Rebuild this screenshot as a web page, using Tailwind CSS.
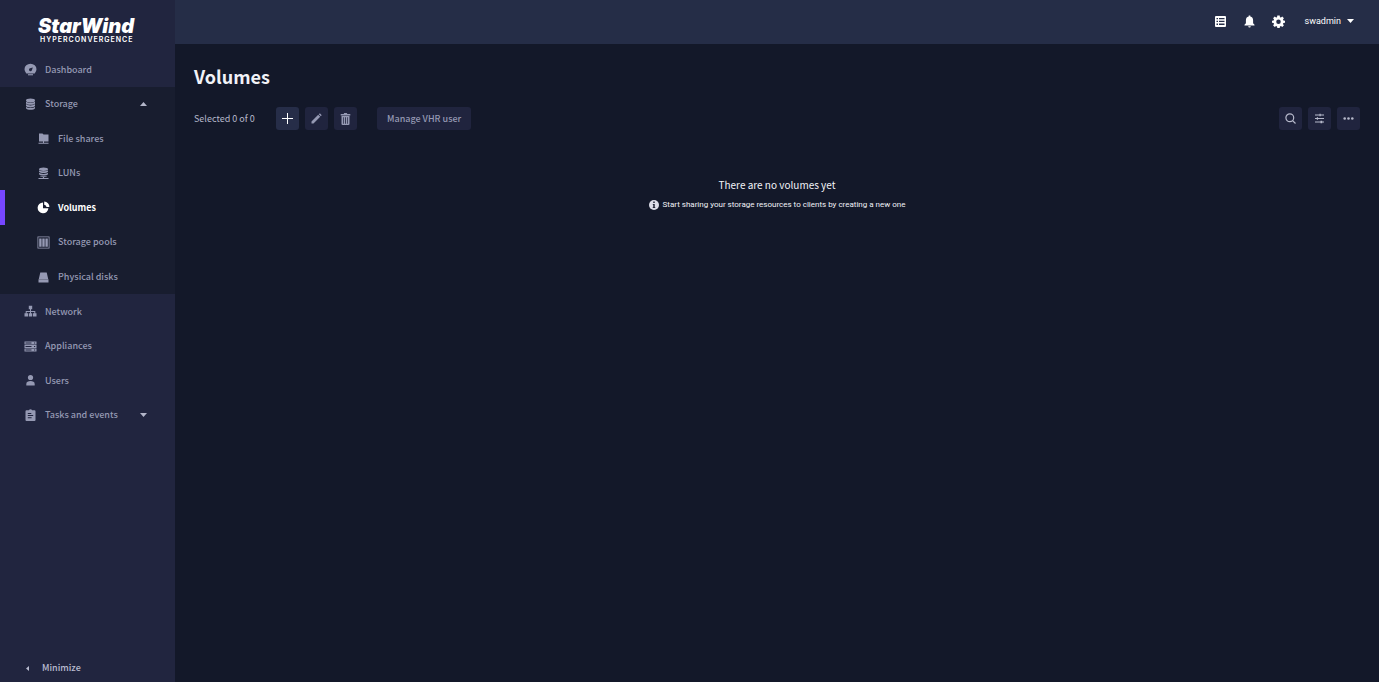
<!DOCTYPE html>
<html lang="en">
<head>
  <meta charset="UTF-8" />
  <title>StarWind - Volumes</title>
  <meta name="viewport" content="width=device-width, initial-scale=1.0">
  <!-- Tailwind CSS -->
  <script src="https://cdn.jsdelivr.net/npm/@tailwindcss/browser@4"></script>
</head>
<body class="flex min-h-screen bg-[#131829] font-['Noto_Sans_CJK_SC','Noto_Sans',sans-serif] text-[9px] leading-4 text-[#9599b3]">

  <!-- Sidebar -->
  <aside class="flex w-[175px] shrink-0 flex-col bg-[#21253f]">
    <a href="#" class="flex h-[52px] shrink-0 flex-col pt-4 pl-[38px] font-[Inter,sans-serif] text-white">
      <span class="text-[20px] leading-5 font-black italic">StarWind</span>
      <span class="pl-[2px] text-[7px] leading-[7px] font-semibold tracking-[1px]">HYPERCONVERGENCE</span>
    </a>

    <nav class="grid h-[380px] shrink-0 auto-rows-fr font-medium">
      <a href="#" class="flex items-center gap-2 pt-px pl-6">
        <svg class="size-[13px]" viewBox="0 0 13 13" fill="currentColor"><path fill-rule="evenodd" d="M2.300 10.400A5.900 5.900 0 0 1 .5 6.300a6 5.600 0 0 1 12 0 5.900 5.900 0 0 1-1.800 4.100zM5 6.800a1.500 1.500 0 0 0 2.900.5L8.800 4.600 6 5.300a1.500 1.500 0 0 0-1 1.500z"/><path d="M4 11.200h5v1.100H4z"/></svg>
        Dashboard
      </a>

      <!-- Storage group -->
      <div class="row-span-6 grid auto-rows-fr bg-[#181d2f]">
        <button type="button" class="flex items-center gap-2 pt-px pl-6" aria-expanded="true">
          <svg class="size-[13px]" viewBox="0 0 13 13" fill="currentColor"><ellipse cx="6.500" cy="2.500" rx="4.500" ry="1.900"/><path d="M2 3.500c1 1.700 8 1.700 9 0v2c-1 1.700-8 1.700-9 0zM2 6.100c1 1.700 8 1.700 9 0v2c-1 1.700-8 1.700-9 0zM2 8.700c1 1.700 8 1.700 9 0v1.600c-1 2-8 2-9 0z"/></svg>
          Storage
          <svg class="mr-7 ml-auto h-1 w-[7px]" viewBox="0 0 7 4" fill="#b3b6c9"><path d="M0 4h7L3.500 0z"/></svg>
        </button>
        <a href="#" class="flex items-center gap-2 pt-px pl-[37px]">
          <svg class="size-[13px]" viewBox="0 0 13 13" fill="currentColor"><path d="M2 1.500h3.500l1 1H11.500v7H2zM6 9.500h1V11H6zM1.500 10.800h10v1h-10z"/></svg>
          File shares
        </a>
        <a href="#" class="flex items-center gap-2 pt-px pl-[37px]">
          <svg class="size-[13px]" viewBox="0 0 13 13" fill="currentColor"><ellipse cx="6.500" cy="2.200" rx="4.500" ry="1.700"/><path d="M2 3.200c1 1.500 8 1.500 9 0v1.600c-1 1.700-8 1.700-9 0zM2 5.800c1 1.500 8 1.500 9 0v1.400c-1 1.700-8 1.700-9 0zM3 8.700c1 .8 6 .8 7 0-.3 1-1.500 1.400-3 1.500v.7h4.500v1h-10v-1H6v-.7C4.500 10.100 3.300 9.700 3 8.700z"/></svg>
          LUNs
        </a>
        <a href="#" class="flex items-center gap-2 border-l-5 border-[#7646ff] pt-px pl-8 font-bold text-white" aria-current="page">
          <svg class="size-[13px]" viewBox="0 0 13 13" fill="currentColor"><path d="M6 1.500v5.700h5.400A5.400 5.400 0 1 1 6 1.500zM7.200.5a5.200 5.200 0 0 1 5.200 5.500H9.500A2.500 2.500 0 0 0 7.200 3.800z"/></svg>
          Volumes
        </a>
        <a href="#" class="flex items-center gap-2 pt-px pl-[37px]">
          <svg class="size-[13px]" viewBox="0 0 13 13" fill="currentColor"><path fill-rule="evenodd" d="M.5.500h12v12H.500zM1.300 1.300v10.400h10.400V1.300z"/><path d="M2.200 2.500h2.400v8.300H2.200zM5.300 2.500h2.400v8.300H5.300zM8.400 2.500h2.400v8.300H8.400z"/></svg>
          Storage pools
        </a>
        <a href="#" class="flex items-center gap-2 pt-px pl-[37px]">
          <svg class="size-[13px]" viewBox="0 0 13 13" fill="currentColor"><path d="M3.300 1.500h6.400l1.500 6.500H1.800zM1.500 8.300h10v3.200h-10z"/></svg>
          Physical disks
        </a>
      </div>

      <a href="#" class="flex items-center gap-2 pt-px pl-6">
        <svg class="size-[13px]" viewBox="0 0 13 13" fill="currentColor"><path d="M4.800.800h3.400v3.400H7V6h4.300v2.300h1.200v3.200H9V8.300h1.300V7H7v1.300h1.200v3.200H4.800V8.300H6V7H2.700v1.300H4v3.200H.500V8.300h1.200V6H6V4.200H4.800z"/></svg>
        Network
      </a>
      <a href="#" class="flex items-center gap-2 pt-px pl-6">
        <svg class="size-[13px]" viewBox="0 0 13 13" fill="currentColor"><path fill-rule="evenodd" d="M.5 1.500h12v3H.500zM.5 5h12v3H.500zM.5 8.500h12v3H.500zM1.500 2.600v.8h6v-.8zm0 3.500v.8h6v-.8zm0 3.500v.8h6v-.8zM10 2.600v.8h1.200v-.8zm0 3.500v.8h1.200v-.8zm0 3.500v.8h1.200v-.8z"/></svg>
        Appliances
      </a>
      <a href="#" class="flex items-center gap-2 pt-px pl-6">
        <svg class="size-[13px]" viewBox="0 0 13 13" fill="currentColor"><circle cx="6.500" cy="3.500" r="2.600"/><path d="M2.300 11.500V10c0-2.200 2-3 4.200-3s4.200.8 4.200 3v1.500z"/></svg>
        Users
      </a>
      <button type="button" class="flex items-center gap-2 pt-px pl-6" aria-expanded="false">
        <svg class="size-[13px]" viewBox="0 0 13 13" fill="currentColor"><path fill-rule="evenodd" d="M2.500 1.300h2.400a1.700 1.700 0 0 1 3.200 0h2.400q1 0 1 1v8.600q0 1-1 1h-8q-1 0-1-1V2.300q0-1 1-1zM3.800 4v1h3.500V4zm0 2.100v1h5.400v-1zm0 2.200v1h3.800v-1z"/></svg>
        Tasks and events
        <svg class="mr-7 ml-auto h-1 w-[7px]" viewBox="0 0 7 4" fill="#b3b6c9"><path d="M0 0h7L3.500 4z"/></svg>
      </button>
    </nav>

    <button type="button" class="mt-auto mb-[6px] flex items-center gap-3 pl-[26px] font-medium text-[#b9bccf]">
      <svg class="h-[5px] w-1" viewBox="0 0 4 5" fill="currentColor"><path d="M3 0v5L0 2.500z"/></svg>
      Minimize
    </button>
  </aside>

  <div class="flex min-w-0 flex-1 flex-col">
    <!-- Top bar -->
    <header class="flex h-11 items-center justify-end bg-[#252d47] pr-[25px] pb-[2px] text-white">
      <button type="button" class="mr-4" aria-label="Tasks">
        <svg class="size-[13px]" viewBox="0 0 13 13" fill="currentColor"><path fill-rule="evenodd" d="M2 1h9q1 0 1 1v9q0 1-1 1H2q-1 0-1-1V2q0-1 1-1zM2.500 3v1.300H4V3zm2.500 0v1.300h5.500V3zM2.500 5.800v1.300H4V5.800zm2.500 0v1.300h5.500V5.800zM2.500 8.600v1.300H4V8.600zm2.500 0v1.300h5.500V8.600z"/></svg>
      </button>
      <button type="button" class="mr-4" aria-label="Notifications">
        <svg class="size-[13px]" viewBox="0 0 13 13" fill="currentColor"><path d="M5.700.5h1.600v1.100C9.300 2 10.100 3.500 10.100 5.500v2.800l1.400 1.500v.7h-10v-.7l1.400-1.500V5.500c0-2 .8-3.500 2.800-3.900zM5.200 11.200h2.600a1.300 1.300 0 0 1-2.600 0z"/></svg>
      </button>
      <button type="button" class="mr-5" aria-label="Settings">
        <svg class="size-[13px]" viewBox="0 0 24 24" fill="currentColor"><path fill-rule="evenodd" d="M9.800 1h4.400l.5 3 1.800.8 2.500-1.900L22 6l-1.800 2.500.8 1.800 3 .5v3.400l-3 .5-.8 1.800L22 19l-3 3-2.500-1.800-1.800.8-.5 3H9.800l-.5-3-1.800-.8L5 22l-3-3 1.800-2.500-.8-1.800-3-.5v-3.400l3-.5.8-1.800L2 6l3-3.100 2.500 1.900L9.300 4zM12 8.300a4.200 4.200 0 1 0 0 8.400 4.200 4.200 0 0 0 0-8.400z"/></svg>
      </button>
      <button type="button" class="flex items-center gap-[6px] font-[Roboto,sans-serif]">
        swadmin
        <svg class="h-1 w-[7px]" viewBox="0 0 7 4" fill="currentColor"><path d="M0 0h7L3.500 4z"/></svg>
      </button>
    </header>

    <main class="flex-1 px-[19px] pt-[19px]">
      <h1 class="text-lg leading-[26px] font-bold text-[#f1f2f7]">Volumes</h1>

      <!-- Toolbar -->
      <div class="mt-[18px] flex items-center">
        <span class="w-[82px] text-[#b6b9cb]">Selected 0 of 0</span>
        <div class="flex gap-[6px]">
          <button type="button" class="grid size-[23px] place-items-center rounded-[3px] bg-[#262d48] text-white" aria-label="Create">
            <svg class="size-[11px]" viewBox="0 0 11 11" fill="currentColor"><path d="M5 0h1v5h5v1H6v5H5V6H0V5h5z"/></svg>
          </button>
          <button type="button" class="grid size-[23px] place-items-center rounded-[3px] bg-[#20243e]" aria-label="Edit">
            <svg class="size-[11px]" viewBox="0 0 11 11" fill="currentColor"><path d="M.5 10.500v-2l6.700-6.700 2 2-6.700 6.700zM7.800 1.200l.7-.7q.3-.2.6 0l1.400 1.400q.2.300 0 .6l-.7.7z"/></svg>
          </button>
          <button type="button" class="grid size-[23px] place-items-center rounded-[3px] bg-[#20243e]" aria-label="Delete">
            <svg class="h-3 w-[11px]" viewBox="0 0 11 12" fill="currentColor"><path fill-rule="evenodd" d="M3.700 1l.4-1h2.800l.4 1h3v1.400H.700V1zM1.500 3h8v8q0 1-1 1h-6q-1 0-1-1zM3.300 4.200v6.500h.7V4.200zm1.800 0v6.500h.8V4.200zm1.900 0v6.500h.7V4.200z"/></svg>
          </button>
        </div>
        <button type="button" class="ml-5 h-[23px] rounded-[3px] bg-[#20243e] px-[10px] font-medium">Manage VHR user</button>
        <div class="ml-auto flex gap-[6px]">
          <button type="button" class="grid size-[23px] place-items-center rounded-[3px] bg-[#20243e]" aria-label="Search">
            <svg class="size-[11px]" viewBox="0 0 11 11" fill="none" stroke="#b6b9cb" stroke-width="1.200"><circle cx="4.800" cy="4.800" r="3.900"/><path d="M7.600 7.600l2.900 2.900"/></svg>
          </button>
          <button type="button" class="grid size-[23px] place-items-center rounded-[3px] bg-[#20243e]" aria-label="Filters">
            <svg class="size-[11px]" viewBox="0 0 11 11" fill="#b6b9cb"><path d="M1 1.600h9v.8H1zM1 5.100h9v.8H1zM1 8.600h9v.8H1zM5.500.800h1.200v2.400H5.500zM2.800 4.300H4v2.400H2.800zM6.500 7.800h1.700v2.400H6.500z"/></svg>
          </button>
          <button type="button" class="grid size-[23px] place-items-center rounded-[3px] bg-[#20243e]" aria-label="More">
            <svg class="size-[11px]" viewBox="0 0 11 11" fill="#b6b9cb"><circle cx="1.700" cy="5.500" r="1.300"/><circle cx="5.500" cy="5.500" r="1.300"/><circle cx="9.300" cy="5.500" r="1.300"/></svg>
          </button>
        </div>
      </div>

      <!-- Empty state -->
      <section class="mt-[46px] flex flex-col items-center gap-[3px] text-[#f1f2f7]">
        <p class="text-[10px] leading-[18px]">There are no volumes yet</p>
        <p class="flex items-center gap-1 font-[Roboto,sans-serif] text-[8px]">
          <svg class="size-[10px]" viewBox="0 0 10 10"><circle cx="5" cy="5" r="5" fill="#dcdde8"/><path fill="#131829" d="M4.300 1.600h1.400V3H4.300zM3.800 4h1.900v3.200h.6V8H3.700v-.8h.6V4.800h-.5z"/></svg>
          Start sharing your storage resources to clients by creating a new one
        </p>
      </section>
    </main>
  </div>
</body>
</html>
